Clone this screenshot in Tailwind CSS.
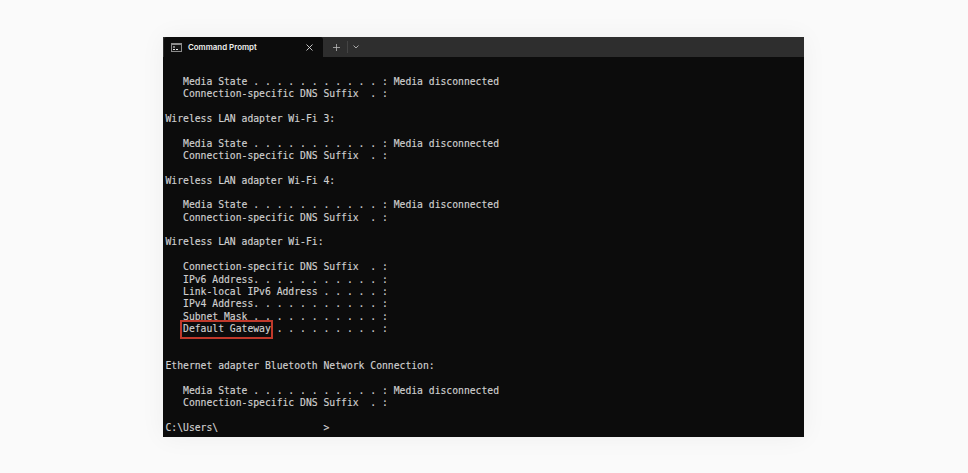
<!DOCTYPE html>
<html lang="en">
<head>
  <meta charset="UTF-8">
  <title>Command Prompt</title>
  <script src="https://cdn.jsdelivr.net/npm/@tailwindcss/browser@4"></script>
</head>
<body class="w-[968px] h-[473px] overflow-hidden bg-[#fafafa]">
  <div class="pt-[37px] pl-[163px]">
    <div class="w-[641px] h-[400px] bg-[#0c0c0c] overflow-hidden shadow-[0_0_24px_rgba(0,0,0,0.05)]">
      <!-- title bar -->
      <div class="h-[20px] bg-[#2e2e2e] flex items-end">
        <div class="w-[159px] h-[20px] ml-[1px] bg-[#0c0c0c] rounded-t-[3px] flex items-center pl-[7px]">
          <svg width="11" height="9" viewBox="0 0 11 9" class="shrink-0">
            <rect x="0" y="0" width="11" height="9" fill="#8c8c8c"/>
            <rect x="1" y="2" width="9" height="6" fill="#141414"/>
            <path d="M2 4h2M2 6.5h2M5 6.5h2" stroke="#e8e8e8" stroke-width="1"/>
          </svg>
          <span class="ml-[6px] mt-[2px] font-['Inter',sans-serif] font-semibold text-[7.9px] text-[#f0f0f0]">Command Prompt</span>
          <svg width="7" height="7" viewBox="0 0 7 7" class="ml-auto mr-[10px]">
            <path d="M0.5 0.5l6 6M6.5 0.5l-6 6" stroke="#d8d8d8" stroke-width="0.9"/>
          </svg>
        </div>
        <div class="h-[20px] flex items-center">
          <svg width="7" height="7" viewBox="0 0 7 7" class="ml-[10px]">
            <path d="M3.5 0v7M0 3.5h7" stroke="#b8b8b8" stroke-width="0.8"/>
          </svg>
          <div class="w-px h-[12px] bg-[#444] ml-[7px]"></div>
          <svg width="6" height="4" viewBox="0 0 6 4" class="ml-[5px]">
            <path d="M0.5 0.5l2.5 2.5 2.5-2.5" fill="none" stroke="#b8b8b8" stroke-width="0.9"/>
          </svg>
        </div>
      </div>
      <!-- console output -->
      <pre class="relative pl-[2.5px] pt-[19px] font-['DejaVu_Sans_Mono',monospace] text-[9.72px] leading-[12.35px] text-[#d0d0d0] [-webkit-text-stroke:0.15px_#d0d0d0]">   Media State . . . . . . . . . . . : Media disconnected
   Connection-specific DNS Suffix  . :

Wireless LAN adapter Wi-Fi 3:

   Media State . . . . . . . . . . . : Media disconnected
   Connection-specific DNS Suffix  . :

Wireless LAN adapter Wi-Fi 4:

   Media State . . . . . . . . . . . : Media disconnected
   Connection-specific DNS Suffix  . :

Wireless LAN adapter Wi-Fi:

   Connection-specific DNS Suffix  . :
   IPv6 Address. . . . . . . . . . . :
   Link-local IPv6 Address . . . . . :
   IPv4 Address. . . . . . . . . . . :
   Subnet Mask . . . . . . . . . . . :
   Default Gateway . . . . . . . . . :


Ethernet adapter Bluetooth Network Connection:

   Media State . . . . . . . . . . . : Media disconnected
   Connection-specific DNS Suffix  . :

C:\Users\                  &gt;<span class="absolute left-[17px] top-[263px] w-[93px] h-[19px] border-2 border-[#c0392b]"></span></pre>
    </div>
  </div>
</body>
</html>
